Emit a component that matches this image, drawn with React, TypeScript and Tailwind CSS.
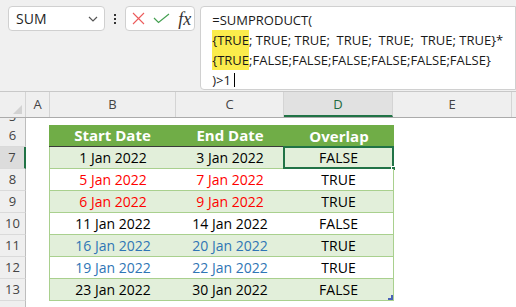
import React from 'react';

const rows = [
  { n: 7, start: '1 Jan 2022', end: '3 Jan 2022', overlap: 'FALSE', color: 'text-black', bg: 'bg-[#e2efda]' },
  { n: 8, start: '5 Jan 2022', end: '7 Jan 2022', overlap: 'TRUE', color: 'text-[#ff0000]', bg: 'bg-white' },
  { n: 9, start: '6 Jan 2022', end: '9 Jan 2022', overlap: 'TRUE', color: 'text-[#ff0000]', bg: 'bg-[#e2efda]' },
  { n: 10, start: '11 Jan 2022', end: '14 Jan 2022', overlap: 'FALSE', color: 'text-black', bg: 'bg-white' },
  { n: 11, start: '16 Jan 2022', end: '20 Jan 2022', overlap: 'TRUE', color: 'text-[#2f75b5]', bg: 'bg-[#e2efda]' },
  { n: 12, start: '19 Jan 2022', end: '22 Jan 2022', overlap: 'TRUE', color: 'text-[#2f75b5]', bg: 'bg-white' },
  { n: 13, start: '23 Jan 2022', end: '30 Jan 2022', overlap: 'FALSE', color: 'text-black', bg: 'bg-[#e2efda]' },
];

const cols = [
  { l: 'A', w: 'w-[24px]' },
  { l: 'B', w: 'w-[126px]' },
  { l: 'C', w: 'w-[108px]' },
  { l: 'D', w: 'w-[109px]' },
  { l: 'E', w: 'w-[119px]' },
  { l: '', w: 'w-[60px]' },
];

function Toolbar() {
  return (
    <div className="flex h-[91px] items-start bg-[#f0f0f0] pt-[6px] pl-[8px]">
      <div className="flex h-[25px] w-[101px] items-center justify-between rounded-[4px] border border-[#d0d0d0] bg-white pl-[7px] pr-[6px]">
        <span className="text-[14px] text-[#1f1f1f]">SUM</span>
        <svg width="10" height="6" viewBox="0 0 10 6" fill="none">
          <path d="M1 1l4 4 4-4" stroke="#555" strokeWidth="1.2" />
        </svg>
      </div>
      <div className="flex h-[25px] w-[21px] flex-col items-center justify-center gap-[2px]">
        <span className="h-[2px] w-[2px] bg-[#333]" />
        <span className="h-[2px] w-[2px] bg-[#333]" />
        <span className="h-[2px] w-[2px] bg-[#333]" />
      </div>
      <div className="flex h-[25px] w-[73px] items-center gap-[8px] rounded-[4px] border border-[#d0d0d0] bg-white pl-[6px]">
        <svg width="13" height="13" viewBox="0 0 13 13">
          <path d="M1 1l11 11M12 1L1 12" stroke="#ec5b5b" strokeWidth="1.1" />
        </svg>
        <svg width="17" height="11" viewBox="0 0 17 11">
          <path d="M1 5l4.5 4.5L16 1" stroke="#45a052" strokeWidth="1.2" fill="none" />
        </svg>
        <span className="text-[18px] italic leading-none text-[#333]" style={{ fontFamily: '"Liberation Serif", serif' }}>
          fx
        </span>
      </div>
      <div className="ml-[5px] h-[84px] w-[330px] rounded-l-[4px] border border-[#d0d0d0] bg-white pl-[11px] pt-[3px] text-[13px] leading-[20px] text-[#1a1a1a]">
        <div>=SUMPRODUCT(</div>
        <div className="whitespace-pre">
          <span className="inline-block bg-[#fbec4c]">{'{TRUE'}</span>
          {'; TRUE; TRUE;  TRUE;  TRUE;  TRUE; TRUE}*'}
        </div>
        <div className="whitespace-pre">
          <span className="inline-block bg-[#fbec4c]">{'{TRUE'}</span>
          {';FALSE;FALSE;FALSE;FALSE;FALSE;FALSE}'}
        </div>
        <div className="flex items-center">
          <span>)&gt;1</span>
          <span className="ml-[3px] h-[14px] w-px bg-black" />
        </div>
      </div>
    </div>
  );
}

function ColumnHeaders() {
  return (
    <div className="flex h-[27px] border-y border-t-[#c8c8c8] border-b-[#ababab] bg-[#efefef] text-[13px] text-[#444]">
      <div className="flex w-[26px] shrink-0 items-end justify-end border-r border-[#d4d4d4] p-[3px]">
        <svg width="9" height="9" viewBox="0 0 9 9">
          <path d="M9 0V9H0Z" fill="#d2d2d2" />
        </svg>
      </div>
      {cols.map((c, i) => (
        <div
          key={i}
          className={`${c.w} flex shrink-0 items-center justify-center border-r border-[#d4d4d4] ${
            c.l === 'D' ? 'border-b-2 border-b-[#217346] bg-[#e1e1e1] pt-[2px] text-[#1e6b41]' : ''
          }`}
        >
          {c.l}
        </div>
      ))}
    </div>
  );
}

function RowHead({ n, active }: { n?: number; active?: boolean }) {
  return (
    <div
      className={`flex h-[22px] w-[26px] shrink-0 items-center justify-center border-b border-b-[#dadada] text-[13px] text-[#444] ${
        active ? 'border-r-2 border-r-[#217346] bg-[#dcdcdc]' : 'border-r border-r-[#bdbdbd] bg-[#efefef]'
      }`}
    >
      {n}
    </div>
  );
}

export default function App() {
  return (
    <div className="h-[307px] w-[516px] overflow-hidden bg-white" style={{ fontFamily: '"Open Sans", sans-serif' }}>
      <Toolbar />
      <ColumnHeaders />

      {/* row 5, mostly scrolled away */}
      <div className="flex h-[7px] overflow-hidden">
        <div className="-mt-[12px] shrink-0">
          <RowHead n={5} />
        </div>
      </div>

      {/* row 6: table header */}
      <div className="flex h-[22px]">
        <RowHead n={6} />
        <div className="w-[23px] shrink-0" />
        <div className="flex w-[127px] shrink-0 items-center justify-center border-b border-[#3a3a3a] bg-[#70ad47] text-[15px] font-bold text-white">
          Start Date
        </div>
        <div className="flex w-[108px] shrink-0 items-center justify-center border-b border-[#3a3a3a] bg-[#70ad47] text-[15px] font-bold text-white">
          End Date
        </div>
        <div className="flex w-[110px] shrink-0 items-center justify-center bg-[#70ad47] text-[15px] font-bold text-white">
          Overlap
        </div>
      </div>

      {rows.map((r) => (
        <div key={r.n} className="flex h-[22px]">
          <RowHead n={r.n} active={r.n === 7} />
          <div className="w-[23px] shrink-0" />
          <div className={`flex w-[127px] shrink-0 items-center justify-center border-b border-l border-[#a9d08e] text-[14px] ${r.bg} ${r.color}`}>
            {r.start}
          </div>
          <div className={`flex w-[108px] shrink-0 items-center justify-center border-b border-[#a9d08e] text-[14px] ${r.bg} ${r.color}`}>
            {r.end}
          </div>
          <div className={`relative flex w-[110px] shrink-0 items-center justify-center border-r border-b border-[#a9d08e] text-[14px] text-black ${r.bg}`}>
            {r.overlap}
            {r.n === 7 && (
              <>
                <div className="absolute -top-px -left-px -right-px -bottom-px border-2 border-[#217346]" />
                <div className="absolute -right-[3px] -bottom-[3px] h-[5px] w-[5px] border border-white bg-[#217346]" />
              </>
            )}
            {r.n === 13 && (
              <svg className="absolute right-0 bottom-0" width="5" height="5" viewBox="0 0 5 5">
                <path d="M3 0h2v5H0V3h3Z" fill="#4a63b8" />
              </svg>
            )}
          </div>
        </div>
      ))}

      <div className="flex h-[22px]">
        <RowHead />
      </div>
    </div>
  );
}
